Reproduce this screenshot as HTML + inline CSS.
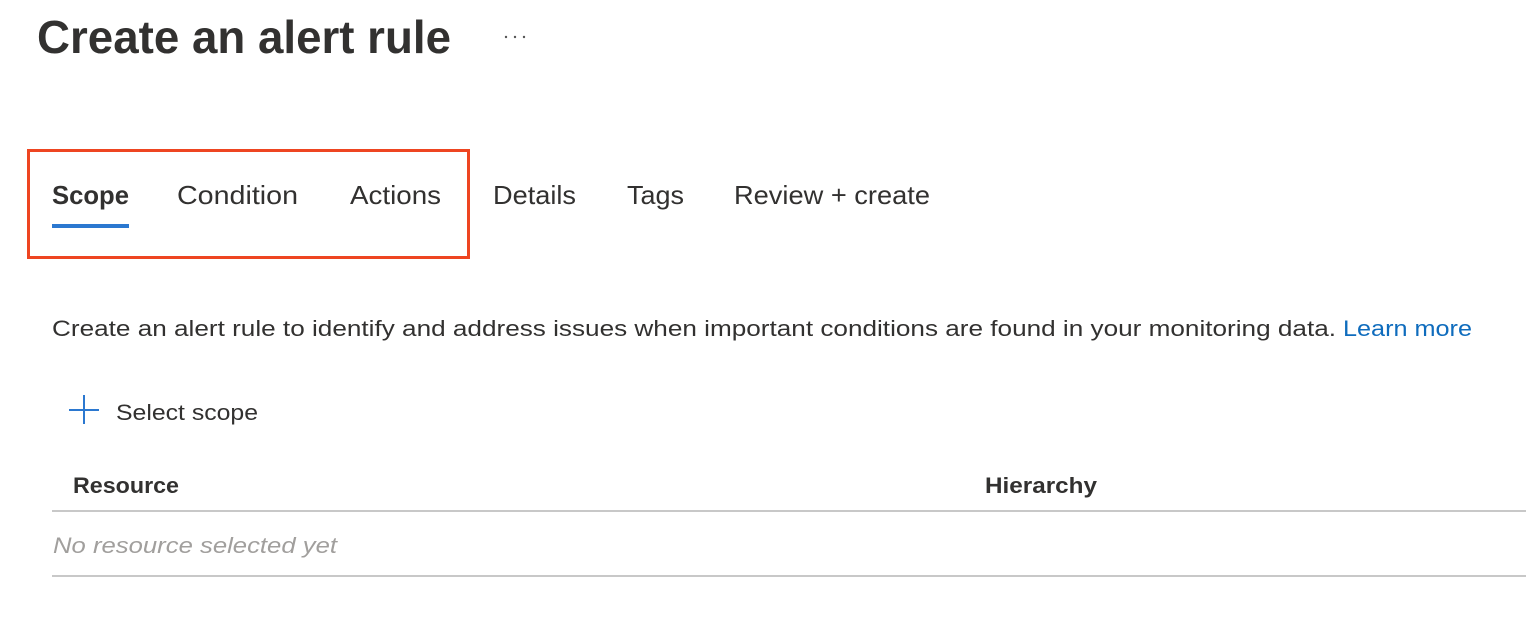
<!DOCTYPE html>
<html><head><style>
html,body{margin:0;padding:0;background:#fff;}
svg{display:block;}
text{font-family:"Liberation Sans",sans-serif;fill:#323130;}
</style></head><body>
<svg width="1526" height="636" viewBox="0 0 1526 636">
<text x="37" y="53" font-size="46" font-weight="bold" textLength="414" lengthAdjust="spacingAndGlyphs">Create an alert rule</text>
<circle cx="506" cy="37" r="1.2" fill="#555"/><circle cx="515" cy="37" r="1.2" fill="#555"/><circle cx="524" cy="37" r="1.2" fill="#555"/>
<rect x="28.5" y="150.5" width="440" height="107" fill="none" stroke="#ee4521" stroke-width="3"/>
<text x="52" y="204" font-size="26" font-weight="bold" textLength="77" lengthAdjust="spacingAndGlyphs">Scope</text>
<text x="177" y="204" font-size="26" textLength="121" lengthAdjust="spacingAndGlyphs">Condition</text>
<text x="350" y="204" font-size="26" textLength="91" lengthAdjust="spacingAndGlyphs">Actions</text>
<text x="493" y="204" font-size="26" textLength="83" lengthAdjust="spacingAndGlyphs">Details</text>
<text x="627" y="204" font-size="26" textLength="57" lengthAdjust="spacingAndGlyphs">Tags</text>
<text x="734" y="204" font-size="26" textLength="196" lengthAdjust="spacingAndGlyphs">Review + create</text>
<rect x="52" y="224" width="77" height="4" fill="#2b78d0"/>
<text x="52" y="336" font-size="22" textLength="1284" lengthAdjust="spacingAndGlyphs">Create an alert rule to identify and address issues when important conditions are found in your monitoring data.</text>
<text x="1343" y="336" font-size="22" fill="#0f6cbd" style="fill:#0f6cbd" textLength="129" lengthAdjust="spacingAndGlyphs">Learn more</text>
<rect x="69" y="409" width="30" height="2" fill="#2b78d0"/>
<rect x="83" y="395" width="2" height="29" fill="#2b78d0"/>
<text x="116" y="420" font-size="22" textLength="142" lengthAdjust="spacingAndGlyphs">Select scope</text>
<text x="73" y="493" font-size="22" font-weight="bold" textLength="106" lengthAdjust="spacingAndGlyphs">Resource</text>
<text x="985" y="493" font-size="22" font-weight="bold" textLength="112" lengthAdjust="spacingAndGlyphs">Hierarchy</text>
<rect x="52" y="510" width="1474" height="2" fill="#c8c8c8"/>
<text x="53" y="553" font-size="22" font-style="italic" style="fill:#a19f9d" textLength="284" lengthAdjust="spacingAndGlyphs">No resource selected yet</text>
<rect x="52" y="575" width="1474" height="2" fill="#c8c8c8"/>
</svg>
</body></html>
